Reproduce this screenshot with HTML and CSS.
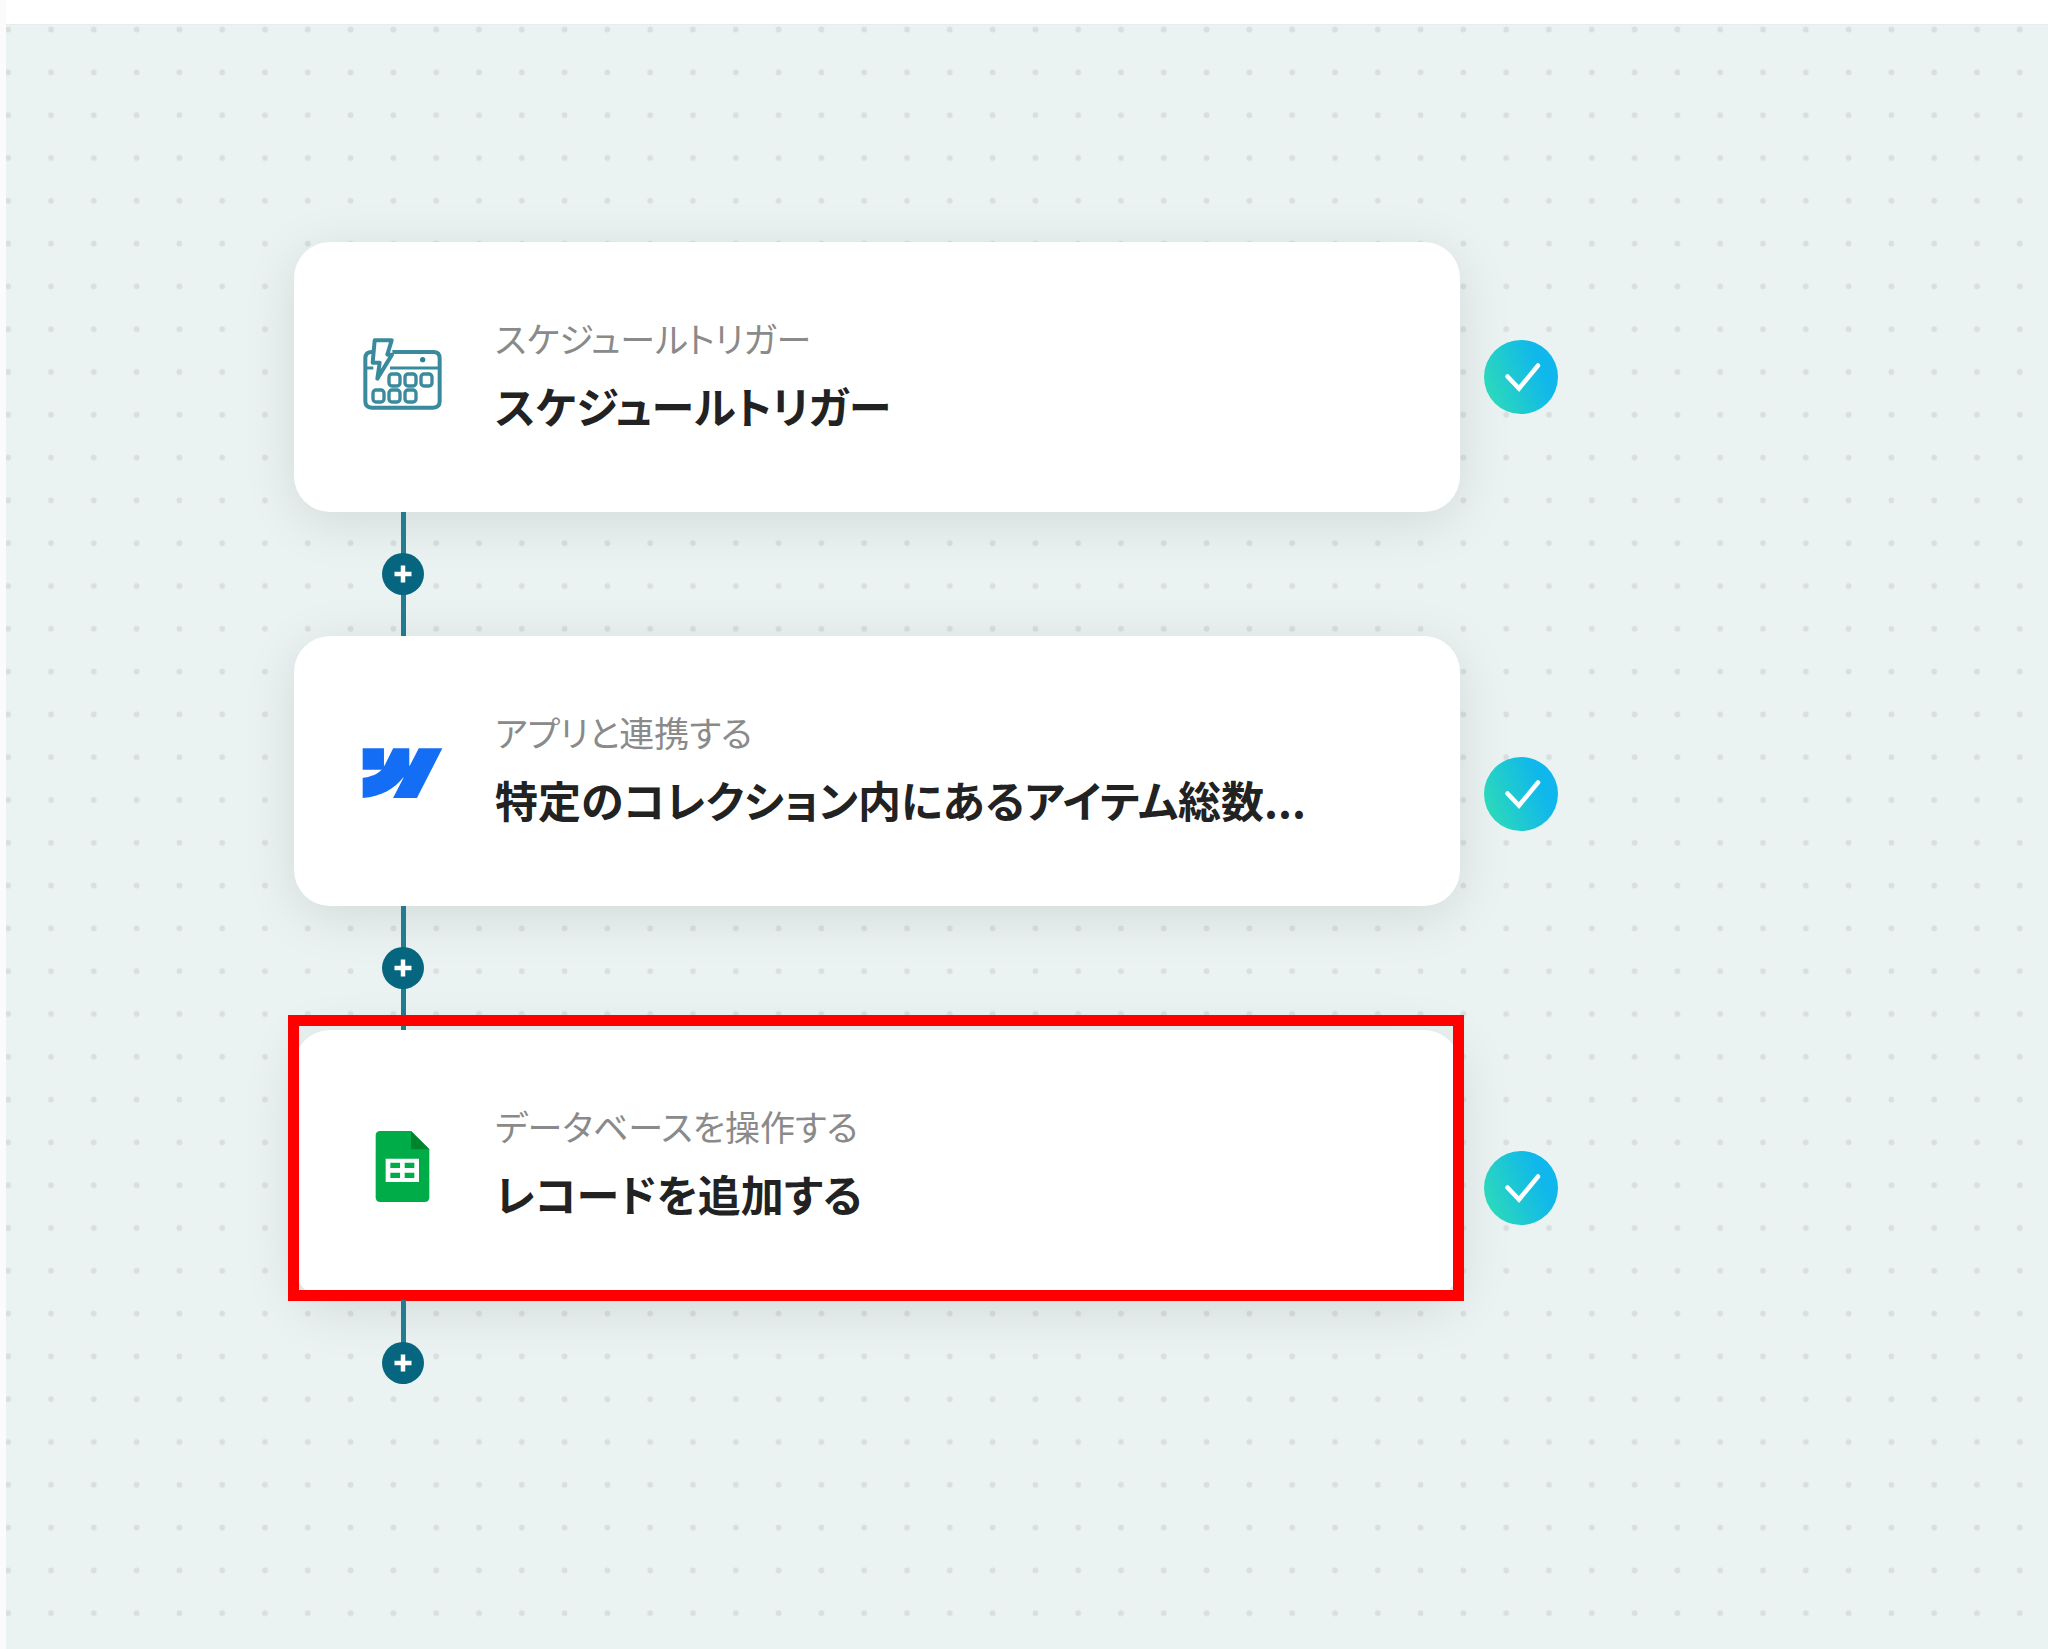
FILE: index.html
```
<!DOCTYPE html>
<html lang="ja">
<head>
<meta charset="utf-8">
<meta name="viewport" content="width=device-width, initial-scale=1">
<title>フロー</title>
<link rel="stylesheet" href="styles.css">
</head>
<body>
<svg class="symbols" aria-hidden="true">
  <defs>
    <linearGradient id="done" x1="0" y1="0.7" x2="1" y2="0.3">
      <stop offset="0.05" stop-color="#2bd8bc"/>
      <stop offset="0.8" stop-color="#0fb7ec"/>
    </linearGradient>
    <symbol id="check" viewBox="0 0 74 74">
      <circle cx="37" cy="37" r="37" fill="url(#done)"/>
      <path d="M23.500 36.500l11.500 12 19-23" fill="none" stroke="#fff" stroke-width="4.500" stroke-linecap="round"/>
    </symbol>
    <symbol id="plus" viewBox="0 0 42 42">
      <path d="M21 12.500v17M12.500 21h17" fill="none" stroke="#fff" stroke-width="4.500"/>
    </symbol>
  </defs>
</svg>
<header class="topbar"></header>
<main class="canvas">
  <svg class="grid" aria-hidden="true">
    <defs>
      <pattern id="dots" x="23.600" y="-16.800" width="42.800" height="42.800" patternUnits="userSpaceOnUse">
        <circle cx="21.400" cy="21.400" r="2.900" fill="#d9dfde"/>
      </pattern>
    </defs>
    <rect width="100%" height="100%" fill="url(#dots)"/>
  </svg>
  <div class="flow">
    <section class="step">
      <article class="card">
        <svg class="icon" viewBox="63 75 252 252" aria-hidden="true">
          <g fill="none" stroke="#3a8a9d" stroke-width="12" stroke-linejoin="round">
            <path d="M157 126H280Q299 126 299 145V274Q299 293 280 293H95Q76 293 76 274V145Q76 126 96 126"/>
            <path d="M76 174H100M150 174H299" stroke-width="9"/>
            <path d="M104 91H155L142 134H156L112 206L119 158H98Z"/>
            <g stroke-width="10">
              <rect x="147" y="192" width="33" height="36" rx="9"/>
              <rect x="195" y="192" width="33" height="36" rx="9"/>
              <rect x="243" y="192" width="33" height="36" rx="9"/>
              <rect x="99" y="240" width="33" height="36" rx="9"/>
              <rect x="147" y="240" width="33" height="36" rx="9"/>
              <rect x="195" y="240" width="33" height="36" rx="9"/>
            </g>
          </g>
          <circle cx="248" cy="149" r="8" fill="#2f8397"/>
        </svg>
        <div class="text">
          <p class="kind">スケジュールトリガー</p>
          <h2 class="name">スケジュールトリガー</h2>
        </div>
      </article>
      <svg class="status" role="img" aria-label="完了"><use href="#check"/></svg>
    </section>
    <div class="connector"><button class="add" type="button" aria-label="追加"><svg><use href="#plus"/></svg></button></div>
    <section class="step">
      <article class="card">
        <svg class="icon" viewBox="63 27 252 252" aria-hidden="true">
          <path transform="translate(68 40) scale(9.960)" fill="#146ef5" d="m24 4.515-7.658 14.970H9.149l3.205-6.204h-.144C9.566 16.713 5.621 18.973 0 19.485v-6.118s3.596-.213 5.710-2.435H0V4.515h6.417v5.278l.144-.001 2.622-5.277h4.854v5.244h.144l2.720-5.244H24Z"/>
        </svg>
        <div class="text">
          <p class="kind">アプリと連携する</p>
          <h2 class="name">特定のコレクション内にあるアイテム総数...</h2>
        </div>
      </article>
      <svg class="status status-low" role="img" aria-label="完了"><use href="#check"/></svg>
    </section>
    <div class="connector"><button class="add" type="button" aria-label="追加"><svg><use href="#plus"/></svg></button></div>
    <section class="step">
      <article class="card card-marked">
        <svg class="icon" viewBox="33 39 252 252" aria-hidden="true">
          <path d="M91 63H183L238 118V262Q238 276 224 276H91Q77 276 77 262V77Q77 63 91 63Z" fill="#00ac47"/>
          <path d="M183 63L238 118H183Z" fill="#00832d"/>
          <path fill="#fff" fill-rule="evenodd" d="M107 146H207V216H107ZM121 158V174H150V158ZM164 158V174H193V158ZM121 188V204H150V188ZM164 188V204H193V188Z"/>
        </svg>
        <div class="text">
          <p class="kind">データベースを操作する</p>
          <h2 class="name">レコードを追加する</h2>
        </div>
      </article>
      <svg class="status status-low" role="img" aria-label="完了"><use href="#check"/></svg>
    </section>
    <div class="connector connector-end"><button class="add" type="button" aria-label="追加"><svg><use href="#plus"/></svg></button></div>
  </div>
</main>
</body>
</html>
```
FILE: styles.css
```
* {
  box-sizing: border-box;
}

body {
  margin: 0;
  min-height: 100vh;
  display: flex;
  flex-direction: column;
  border-left: 6px solid #fbfbfb;
  background: #fff;
  font-family: "Noto Sans CJK JP", sans-serif;
  font-feature-settings: "palt";
}

.symbols {
  position: absolute;
  width: 0;
  height: 0;
}

.topbar {
  height: 24px;
  background: #fff;
}

.canvas {
  position: relative;
  flex: 1;
  padding: 217px 288px;
  background: #eaf3f2;
  border-top: 1px solid #e6eeed;
}

.grid {
  position: absolute;
  inset: 0;
  width: 100%;
  height: 100%;
}

.flow {
  position: relative;
}

.step {
  display: flex;
  align-items: center;
  gap: 24px;
}

.card {
  position: relative;
  flex: 0 1 1166px;
  height: 270px;
  display: flex;
  align-items: center;
  gap: 50px;
  padding: 0 67px;
  border-radius: 36px;
  background: #fff;
  box-shadow: 0 10px 54px rgba(0, 0, 0, 0.1);
}

/* Red frame round the step being explained */
.card-marked::after {
  content: "";
  position: absolute;
  inset: -15px -4px -1px -6px;
  border: 11px solid #f00;
}

.icon {
  flex: none;
  width: 84px;
  height: 84px;
}

.text {
  padding-bottom: 4px;
}

.kind,
.name {
  margin: 0;
  white-space: nowrap;
}

.kind {
  font-size: 35px;
  line-height: 60px;
  color: #8a8a8a;
}

.name {
  font-size: 43px;
  line-height: 74px;
  font-weight: 600;
  color: #222;
}

.status {
  flex: none;
  position: relative;
  width: 74px;
  height: 74px;
}

.status-low {
  margin-top: 46px;
}

.connector {
  width: 42px;
  height: 124px;
  margin-left: 88px;
  position: relative;
  display: flex;
  align-items: center;
  background: linear-gradient(#247c91, #247c91) center / 5px 100% no-repeat;
}

.connector-end {
  height: 84px;
  align-items: flex-end;
}

.add {
  width: 42px;
  height: 42px;
  padding: 0;
  border: 0;
  border-radius: 50%;
  background: #06667f;
}

.add svg {
  display: block;
  width: 42px;
  height: 42px;
}
```
